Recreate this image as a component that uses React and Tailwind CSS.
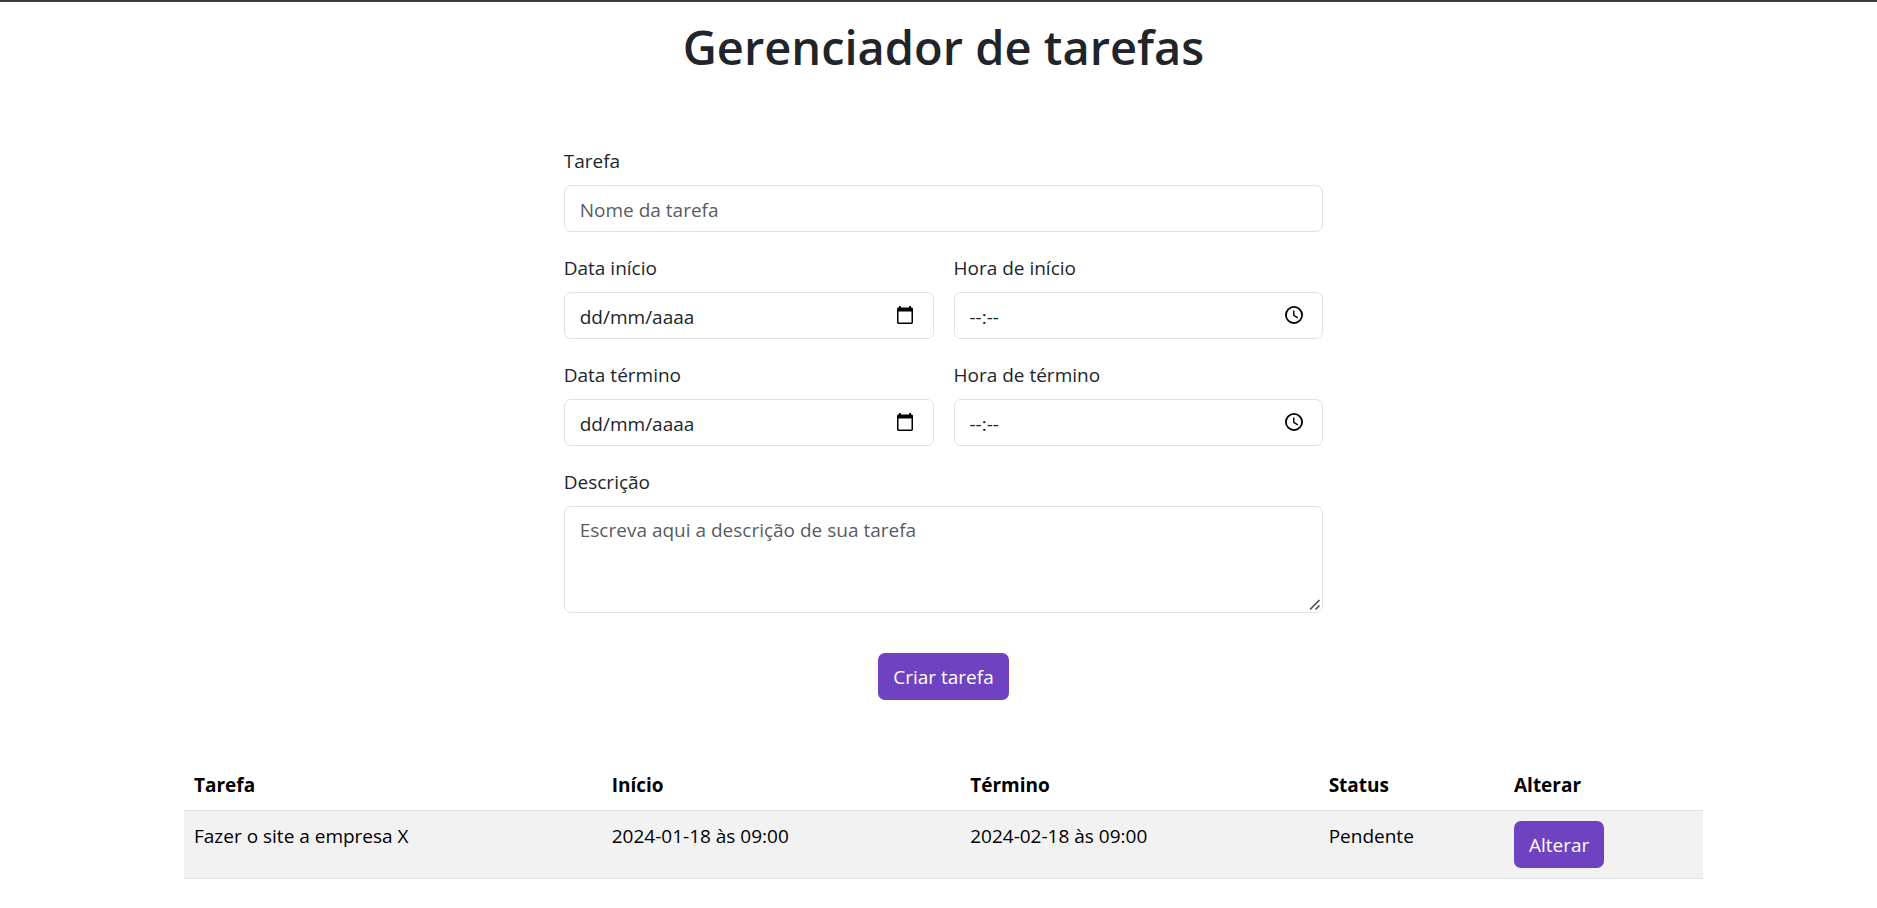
const controlClass =
  "block w-full rounded-[7px] border border-[#dee2e6] bg-white px-[15px] text-[19px] leading-[30px] text-[#212529] outline-none focus:border-[#6f42c1]";
const buttonClass =
  "h-[47px] rounded-[7px] bg-[#6f42c1] px-[15px] text-[19px] leading-[30px] text-white hover:bg-[#5e37a6]";

function CalendarIcon() {
  return (
    <svg width="20" height="20" viewBox="0 0 20 20" fill="#000" aria-hidden="true">
      <path
        fillRule="evenodd"
        d="M4 1h1.800v1.600h8.400V1h1.800v1.600h.6A1.400 1.400 0 0 1 18 4V17.600A1.400 1.400 0 0 1 16.600 19H3.400A1.400 1.400 0 0 1 2 17.600V4A1.400 1.400 0 0 1 3.400 2.600H4zM3.500 6.500V17.500H16.500V6.500z"
      />
    </svg>
  );
}

function ClockIcon() {
  return (
    <svg width="20" height="20" viewBox="0 0 20 20" fill="none" stroke="#000" aria-hidden="true">
      <circle cx="10" cy="10" r="8.100" strokeWidth="1.800" />
      <path d="M9.800 5.500V10.400L13.800 12.800" strokeWidth="1.400" />
    </svg>
  );
}

function Field({ id, label, children }) {
  return (
    <div className="flex min-w-0 flex-col gap-2">
      <label htmlFor={id} className="self-start leading-8">
        {label}
      </label>
      {children}
    </div>
  );
}

function PickerField({ id, label, placeholder, pickerLabel, icon }) {
  return (
    <Field id={id} label={label}>
      <div className="relative">
        <input
          id={id}
          type="text"
          placeholder={placeholder}
          className={`${controlClass} h-[47px] pt-0.5 placeholder:text-[#212529]`}
        />
        <button
          type="button"
          aria-label={pickerLabel}
          className="absolute top-[13px] right-[19px]"
        >
          {icon}
        </button>
      </div>
    </Field>
  );
}

const tasks = [
  {
    name: "Fazer o site a empresa X",
    start: "2024-01-18 às 09:00",
    end: "2024-02-18 às 09:00",
    status: "Pendente",
  },
];

export default function App() {
  return (
    <div className="min-h-screen border-t-2 border-[#3c3b3d] bg-white pl-2.5 font-['Open_Sans','Noto_Sans',sans-serif] text-[19px] text-[#212529]">
      <main className="mx-auto w-full max-w-[1519px] pt-[15px]">
        <h1 className="text-center text-[47px] leading-[60px] font-semibold">Gerenciador de tarefas</h1>

        <form
          className="mx-auto mt-[68px] flex w-full flex-col gap-5 md:w-1/2"
          onSubmit={(event) => event.preventDefault()}
        >
          <Field id="tarefa" label="Tarefa">
            <input
              id="tarefa"
              type="text"
              placeholder="Nome da tarefa"
              className={`${controlClass} h-[47px] pt-0.5 placeholder:text-[#595c5f]`}
            />
          </Field>
          <div className="grid grid-cols-2 gap-5">
            <PickerField id="data-inicio" label="Data início" placeholder="dd/mm/aaaa" pickerLabel="Escolher data de início" icon={<CalendarIcon />} />
            <PickerField id="hora-inicio" label="Hora de início" placeholder="--:--" pickerLabel="Escolher hora de início" icon={<ClockIcon />} />
            <PickerField id="data-termino" label="Data término" placeholder="dd/mm/aaaa" pickerLabel="Escolher data de término" icon={<CalendarIcon />} />
            <PickerField id="hora-termino" label="Hora de término" placeholder="--:--" pickerLabel="Escolher hora de término" icon={<ClockIcon />} />
          </div>
          <Field id="descricao" label="Descrição">
            <div className="relative">
              <textarea
                id="descricao"
                placeholder="Escreva aqui a descrição de sua tarefa"
                className={`${controlClass} h-[107px] resize-y pt-2 placeholder:text-[#595c5f] [&::-webkit-resizer]:bg-transparent`}
              />
              <svg
                width="12"
                height="12"
                viewBox="0 0 12 12"
                fill="none"
                stroke="#4a4a4a"
                strokeWidth="1.600"
                className="pointer-events-none absolute right-0.5 bottom-0.5"
                aria-hidden="true"
              >
                <path d="M1 10.500L10.500 1M6.500 10.500L10.500 6.500" />
              </svg>
            </div>
          </Field>
          <div className="mt-5 flex justify-center">
            <button type="submit" className={buttonClass}>
              Criar tarefa
            </button>
          </div>
        </form>

        <table className="mt-[60px] w-full table-fixed border-collapse text-left text-black">
          <colgroup>
            <col className="w-[27.5%]" />
            <col className="w-[23.6%]" />
            <col className="w-[23.6%]" />
            <col className="w-[12.2%]" />
            <col className="w-[13.1%]" />
          </colgroup>
          <thead>
            <tr className="border-b border-[#dee2e6] leading-[30px]">
              <th className="p-2.5 font-bold">Tarefa</th>
              <th className="p-2.5 font-bold">Início</th>
              <th className="p-2.5 font-bold">Término</th>
              <th className="p-2.5 font-bold">Status</th>
              <th className="p-2.5 font-bold">Alterar</th>
            </tr>
          </thead>
          <tbody>
            {tasks.map((task) => (
              <tr key={task.name} className="border-b border-[#dee2e6] bg-[#f2f2f2] align-top leading-[30px]">
                <td className="p-2.5">{task.name}</td>
                <td className="p-2.5">{task.start}</td>
                <td className="p-2.5">{task.end}</td>
                <td className="p-2.5">{task.status}</td>
                <td className="p-2.5">
                  <button type="button" className={`${buttonClass} block`}>
                    Alterar
                  </button>
                </td>
              </tr>
            ))}
          </tbody>
        </table>
      </main>
    </div>
  );
}
